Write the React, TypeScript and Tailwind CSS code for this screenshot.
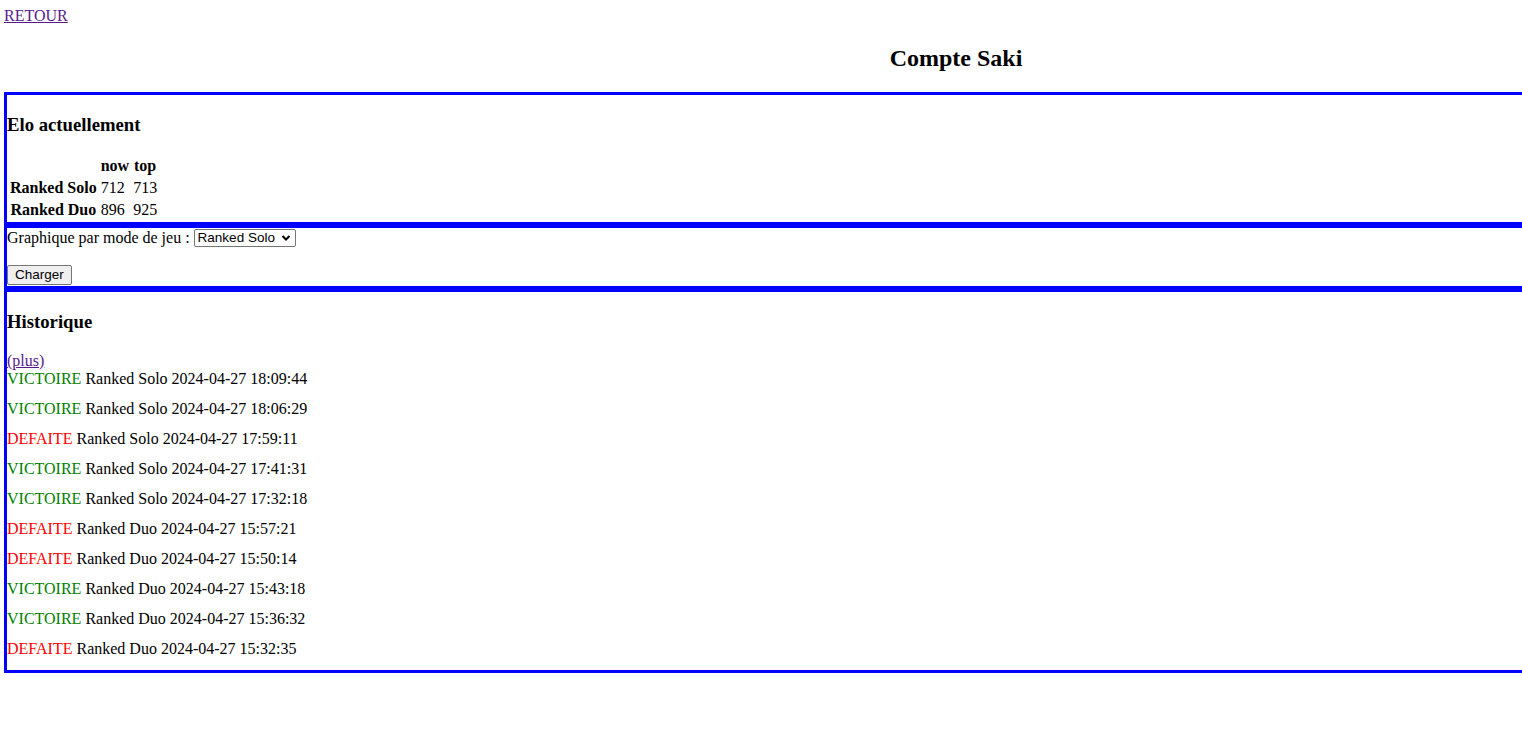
import React from "react";

const history = [
  { win: true, mode: "Ranked Solo", date: "2024-04-27 18:09:44" },
  { win: true, mode: "Ranked Solo", date: "2024-04-27 18:06:29" },
  { win: false, mode: "Ranked Solo", date: "2024-04-27 17:59:11" },
  { win: true, mode: "Ranked Solo", date: "2024-04-27 17:41:31" },
  { win: true, mode: "Ranked Solo", date: "2024-04-27 17:32:18" },
  { win: false, mode: "Ranked Duo", date: "2024-04-27 15:57:21" },
  { win: false, mode: "Ranked Duo", date: "2024-04-27 15:50:14" },
  { win: true, mode: "Ranked Duo", date: "2024-04-27 15:43:18" },
  { win: true, mode: "Ranked Duo", date: "2024-04-27 15:36:32" },
  { win: false, mode: "Ranked Duo", date: "2024-04-27 15:32:35" },
];

const elo = [
  { mode: "Ranked Solo", now: 712, top: 713 },
  { mode: "Ranked Duo", now: 896, top: 925 },
];

export default function App() {
  return (
    <div className="w-full min-h-[749px] overflow-hidden bg-white text-black font-['Liberation_Serif',serif] text-[16px] leading-[18px]">
      <div className="w-[1904px] ml-[4px] pt-[7px]">
        <a href="#" className="text-[#551a8b] underline">
          RETOUR
        </a>

        <h2 className="mt-[20px] mb-[20px] text-center text-[24px] leading-[27px] font-bold">
          Compte Saki
        </h2>

        {/* Elo */}
        <div className="border-[3px] border-[#0000ff]">
          <h3 className="my-[19px] text-[18.72px] leading-[21px] font-bold">Elo actuellement</h3>
          <table className="border-separate border-spacing-[2px]">
            <thead>
              <tr>
                <th className="p-[1px]"></th>
                <th className="p-[1px] text-center font-bold">now</th>
                <th className="p-[1px] text-center font-bold">top</th>
              </tr>
            </thead>
            <tbody>
              {elo.map((row) => (
                <tr key={row.mode}>
                  <th className="p-[1px] text-center font-bold">{row.mode}</th>
                  <td className="p-[1px]">{row.now}</td>
                  <td className="p-[1px]">{row.top}</td>
                </tr>
              ))}
            </tbody>
          </table>
        </div>

        {/* Graphique */}
        <div className="border-[3px] border-[#0000ff]">
          <div className="flex items-start h-[21px] pt-[1px]">
            <span>Graphique par mode de jeu :</span>
            <div className="ml-[4px] flex items-center h-[18px] border border-[#767676] rounded-[2px] bg-white pl-[3px] pr-[4px] font-['Liberation_Sans',Arial,sans-serif] text-[13.5px] leading-[16px]">
              <span>Ranked Solo</span>
              <svg width="10" height="10" viewBox="0 0 10 10" className="ml-[6px]">
                <polyline points="1.5,3 5,6.5 8.5,3" fill="none" stroke="#000" strokeWidth="2" />
              </svg>
            </div>
          </div>
          <div className="h-[16px]" />
          <button className="h-[20px] px-[7px] border border-[#767676] rounded-[2px] bg-[#efefef] font-['Liberation_Sans',Arial,sans-serif] text-[13.5px] leading-[16px]">
            Charger
          </button>
          <div className="h-[1px]" />
        </div>

        {/* Historique */}
        <div className="border-[3px] border-[#0000ff]">
          <h3 className="mt-[19px] mb-[20px] text-[18.72px] leading-[21px] font-bold">Historique</h3>
          <a href="#" className="text-[#551a8b] underline">
            (plus)
          </a>
          <div>
            {history.map((h, i) => (
              <div key={i} className="mb-[12px]">
                <span className={h.win ? "text-[#008000]" : "text-[#ff0000]"}>
                  {h.win ? "VICTOIRE" : "DEFAITE"}
                </span>{" "}
                {h.mode} {h.date}
              </div>
            ))}
          </div>
        </div>
      </div>
    </div>
  );
}
